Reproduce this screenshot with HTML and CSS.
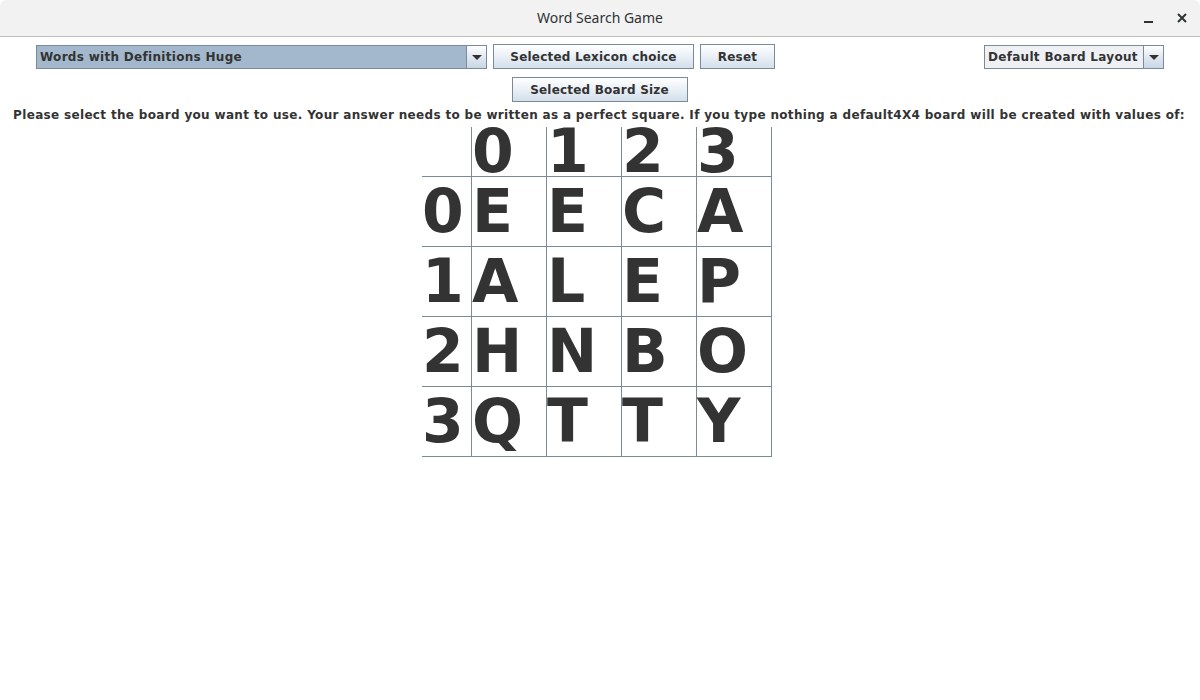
FILE: index.html
```html
<!DOCTYPE html>
<html>
<head>
<meta charset="utf-8">
<title>Word Search Game</title>
<link rel="stylesheet" href="styles.css">
</head>
<body>
<div class="window">
  <div class="titlebar">
    <span class="title">Word Search Game</span>
    <div class="winbtns">
      <svg class="winbtn" width="12" height="12" viewBox="0 0 12 12"><rect x="1" y="9" width="9" height="2" fill="#2e3436"/></svg>
      <svg class="winbtn" width="12" height="12" viewBox="0 0 12 12"><path d="M2 2 L10 10 M10 2 L2 10" stroke="#2e3436" stroke-width="2" fill="none"/></svg>
    </div>
  </div>
  <div class="content">
    <div class="row row-top">
      <div class="combo combo-lexicon">
        <div class="combo-value selected">Words with Definitions Huge</div>
        <div class="combo-arrow"><span class="tri"></span></div>
      </div>
      <button class="btn btn-lexicon">Selected Lexicon choice</button>
      <button class="btn btn-reset">Reset</button>
      <div class="combo combo-layout">
        <div class="combo-value">Default Board Layout</div>
        <div class="combo-arrow"><span class="tri"></span></div>
      </div>
    </div>
    <div class="row row-size">
      <button class="btn btn-size">Selected Board Size</button>
    </div>
    <p class="prompt">Please select the board you want to use. Your answer needs to be written as a perfect square. If you type nothing a default4X4 board will be created with values of:</p>
    <div class="board-wrap">
      <div class="board">
        <div class="cell head"></div>
        <div class="cell head">0</div>
        <div class="cell head">1</div>
        <div class="cell head">2</div>
        <div class="cell head">3</div>

        <div class="cell">0</div>
        <div class="cell">E</div>
        <div class="cell">E</div>
        <div class="cell">C</div>
        <div class="cell">A</div>

        <div class="cell">1</div>
        <div class="cell">A</div>
        <div class="cell">L</div>
        <div class="cell">E</div>
        <div class="cell">P</div>

        <div class="cell">2</div>
        <div class="cell">H</div>
        <div class="cell">N</div>
        <div class="cell">B</div>
        <div class="cell">O</div>

        <div class="cell">3</div>
        <div class="cell">Q</div>
        <div class="cell">T</div>
        <div class="cell">T</div>
        <div class="cell">Y</div>
      </div>
    </div>
  </div>
</div>
</body>
</html>
```
FILE: styles.css
```css
* { box-sizing: border-box; }

html, body {
  margin: 0;
  padding: 0;
  background: #ffffff;
}

body {
  width: 1200px;
  height: 700px;
  overflow: hidden;
  font-family: "DejaVu Sans", sans-serif;
  color: #333333;
}

.window {
  width: 1200px;
  height: 700px;
  background: #ffffff;
}

.titlebar {
  position: relative;
  height: 37px;
  background: #f2f2f2;
  border-bottom: 1px solid #bdbdbd;
  border-radius: 6px 6px 0 0;
  display: flex;
  align-items: center;
  justify-content: center;
}

.title {
  font-family: "Noto Sans", "DejaVu Sans", sans-serif;
  font-size: 14px;
  color: #2e3436;
  margin-top: -1px;
}

.winbtns {
  position: absolute;
  right: 12px;
  top: 12px;
  display: flex;
  gap: 21px;
}

.winbtn { display: block; }

.content {
  display: flex;
  flex-direction: column;
}

.row {
  display: flex;
}

.row-top {
  padding: 7px 36px 0 36px;
  align-items: flex-end;
  height: 32px;
}

.combo {
  display: flex;
  height: 24px;
  border: 1px solid #7a8a99;
  background: #eef0f3;
}

.combo-lexicon { width: 451px; }

.combo-layout {
  width: 180px;
  margin-left: auto;
}

.combo-value {
  flex: 1;
  font-size: 12px;
  font-weight: bold;
  line-height: 22px;
  padding-left: 3px;
  white-space: nowrap;
  overflow: hidden;
  letter-spacing: 0.3px;
}

.combo-value.selected {
  background: #a3b8cc;
}

.combo-arrow {
  width: 20px;
  border-left: 1px solid #7a8a99;
  background: linear-gradient(#ffffff, #dbe4ee 60%, #c9d7e5);
  display: flex;
  align-items: center;
  justify-content: center;
}

.tri {
  width: 0;
  height: 0;
  border-left: 5px solid transparent;
  border-right: 5px solid transparent;
  border-top: 5px solid #333333;
  margin-top: 1px;
}

.btn {
  height: 25px;
  padding: 0;
  border: 1px solid #7a8a99;
  background: linear-gradient(#ffffff, #eef3f8 40%, #d3dfeb);
  font-family: "DejaVu Sans", sans-serif;
  font-size: 12px;
  font-weight: bold;
  color: #333333;
  margin-left: 6px;
  letter-spacing: 0.2px;
}

.btn-lexicon { width: 201px; }
.btn-reset { width: 75px; }

.row-size {
  justify-content: center;
  padding-top: 8px;
  padding-right: 1px;
}

.btn-size {
  width: 176px;
  margin-left: 0;
}

.prompt {
  margin: 6px 0 0 0;
  font-size: 12px;
  font-weight: bold;
  line-height: 14px;
  text-align: center;
  white-space: nowrap;
  padding-right: 2px;
  letter-spacing: 0.33px;
}

.board-wrap {
  display: flex;
  justify-content: center;
  padding-right: 6px;
  margin-top: 5px;
}

.board {
  display: grid;
  grid-template-columns: 50px repeat(4, 75px);
  grid-template-rows: 50px repeat(4, 70px);
}

.cell {
  border-right: 1px solid #7a8a99;
  border-bottom: 1px solid #7a8a99;
  font-size: 60px;
  font-weight: bold;
  line-height: 69px;
  color: #333333;
  white-space: nowrap;
  overflow: visible;
}

.cell.head {
  line-height: 49px;
}
```
